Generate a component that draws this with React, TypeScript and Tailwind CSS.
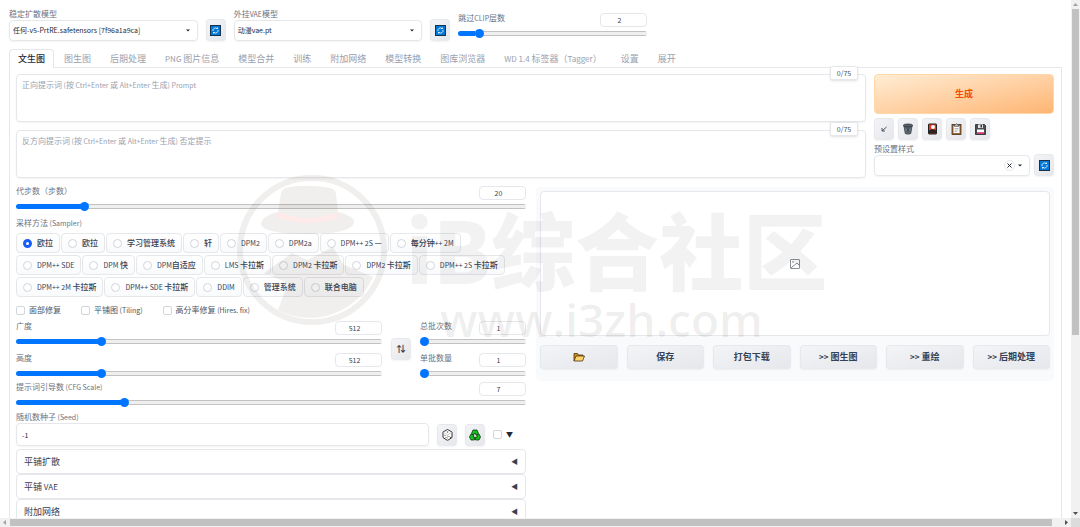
import { ReactNode, useState } from "react";

const models = ["任何-v5-PrtRE.safetensors [7f96a1a9ca]"];
const vaes = ["动漫vae.pt"];

const tabs = [
  "文生图",
  "图生图",
  "后期处理",
  "PNG 图片信息",
  "模型合并",
  "训练",
  "附加网络",
  "模型转换",
  "图库浏览器",
  "WD 1.4 标签器（Tagger）",
  "设置",
  "展开",
];

const samplerRows = [
  ["欧拉", "欧拉", "学习管理系统", "轩", "DPM2", "DPM2a", "DPM++ 2S —", "每分钟++ 2M"],
  ["DPM++ SDE", "DPM 快", "DPM自适应", "LMS 卡拉斯", "DPM2 卡拉斯", "DPM2 卡拉斯", "DPM++ 2S 卡拉斯"],
  ["DPM++ 2M 卡拉斯", "DPM++ SDE 卡拉斯", "DDIM", "管理系统", "联合电脑"],
];

const outputButtons = ["保存", "打包下载", ">> 图生图", ">> 重绘", ">> 后期处理"];
const accordions = ["平铺扩散", "平铺 VAE", "附加网络"];

// latin runs are set one pixel smaller than the chinese around them
function Txt({ children, big }: { children: string; big?: boolean }) {
  const parts = children.split(/([\x20-\x7e]+)/).filter((p) => p !== "");
  return (
    <span className={big ? "text-[9px]" : "text-[8px]"}>
      {parts.map((p, i) =>
        /^[\x20-\x7e]+$/.test(p) ? (
          <span key={i} className={big ? "text-[8px]" : "text-[7px] font-normal"}>
            {p}
          </span>
        ) : (
          p
        )
      )}
    </span>
  );
}

function RefreshIcon() {
  return (
    <svg width="11" height="11" viewBox="0 0 22 22">
      <rect x="1" y="1" width="20" height="20" fill="#0078d7" stroke="#17324d" strokeWidth="2" />
      <path d="M6 12a5 5 0 0 1 8-5M16 10a5 5 0 0 1-8 5" fill="none" stroke="#d5ecff" strokeWidth="2" />
      <path d="M12 8h4V4zM10 14H6v4z" fill="#d5ecff" />
    </svg>
  );
}

function ArrowIcon() {
  return (
    <svg width="10" height="10" viewBox="0 0 20 20" fill="none" stroke="#4b5563" strokeWidth="2">
      <path d="M15 6L6 14" />
      <path d="M6 8v6h6" />
    </svg>
  );
}

function TrashIcon() {
  return (
    <svg width="12" height="12" viewBox="0 0 24 24">
      <path d="M4 6l2.500 15c2 1.500 9 1.500 11 0L20 6z" fill="#6b7780" stroke="#30373c" strokeWidth="1.500" />
      <path d="M8 9l8 10M16 9L8 19M12 8v13" stroke="#39434a" strokeWidth="1.500" />
      <ellipse cx="12" cy="5" rx="9.500" ry="3" fill="#56616a" stroke="#262c30" strokeWidth="1.500" />
    </svg>
  );
}

function CardIcon() {
  return (
    <svg width="11" height="12" viewBox="0 0 22 24">
      <rect x="3" y="2" width="16" height="20" rx="1" fill="#e8381b" stroke="#222" strokeWidth="2" />
      <circle cx="12" cy="8" r="4" fill="#fff" />
      <path d="M4 21v-6q7-5 14 0v6z" fill="#262626" />
    </svg>
  );
}

function ClipboardIcon() {
  return (
    <svg width="11" height="12" viewBox="0 0 22 24">
      <rect x="2" y="3" width="18" height="20" fill="#a5662c" stroke="#33291f" strokeWidth="1.500" />
      <rect x="5" y="6" width="12" height="14" fill="#fff" />
      <path d="M7 11h8M7 14h8M7 17h5" stroke="#777" strokeWidth="1" />
      <path d="M7 7V3h2l2-2 2 2h2v4z" fill="#aeb6bd" stroke="#333" />
    </svg>
  );
}

function FloppyIcon() {
  return (
    <svg width="11" height="11" viewBox="0 0 22 22">
      <path d="M1 1h18l2 2v18H1z" fill="#4a4a4f" stroke="#1f1f22" strokeWidth="1.500" />
      <rect x="6" y="1" width="10" height="7" fill="#dfe3e6" />
      <rect x="11" y="2" width="3" height="5" fill="#333" />
      <rect x="4" y="11" width="14" height="6" fill="#fff" />
      <rect x="4" y="17" width="14" height="3" fill="#e3317f" />
    </svg>
  );
}

function FolderIcon() {
  return (
    <svg width="12" height="10" viewBox="0 0 24 20">
      <path d="M2 18V3h7l2 3h9v4" fill="#d98d17" stroke="#3d2a0c" strokeWidth="1.500" />
      <path d="M2 18L6 8h17l-4 10z" fill="#ffd46b" stroke="#3d2a0c" strokeWidth="1.500" />
    </svg>
  );
}

function DiceIcon() {
  return (
    <svg width="11" height="12" viewBox="0 0 22 24">
      <path d="M11 1l9 5v11l-9 6-9-6V6z" fill="#fff" stroke="#333" strokeWidth="2" />
      <path d="M2 6l9 6 9-6M11 12v11" fill="none" stroke="#bbb" strokeWidth="1.500" />
      <circle cx="11" cy="6" r="1.500" fill="#d22" />
      <path d="M6 12v2M8 16v2M14 14v2M17 16v2" stroke="#555" strokeWidth="2" />
    </svg>
  );
}

function RecycleIcon() {
  return (
    <svg width="12" height="12" viewBox="0 0 24 24" stroke="#0b2c0c" strokeWidth="1.500" strokeLinejoin="round">
      <path d="M8 2h8l3 7-5 3-2-4-3 4-4-3z" fill="#13c21a" />
      <path d="M4 10l6 2-2 4h3v6H4l-3-6z" fill="#13c21a" />
      <path d="M20 10l3 6-3 6h-7v-6h4l-2-4z" fill="#13c21a" />
    </svg>
  );
}

function ImageIcon() {
  return (
    <svg width="10" height="10" viewBox="0 0 20 20" fill="none" stroke="#8a8f98" strokeWidth="2">
      <rect x="1" y="1" width="18" height="18" rx="1" />
      <circle cx="6" cy="6" r="1" />
      <path d="M2 18L14 8l5 5" />
    </svg>
  );
}

function Caret() {
  return (
    <svg width="4" height="3" viewBox="0 0 8 6" className="pointer-events-none shrink-0">
      <path d="M0 1h8L4 5z" fill="#1f2937" />
    </svg>
  );
}

function ToolButton({ label, children }: { label: string; children: ReactNode }) {
  return (
    <button
      aria-label={label}
      className="flex h-[22px] w-5 shrink-0 items-center justify-center rounded border border-gray-200/70 bg-linear-to-br from-gray-100 to-gray-200 text-gray-700 shadow-xs"
    >
      {children}
    </button>
  );
}

function Dropdown({ id, label, options }: { id: string; label: string; options: string[] }) {
  return (
    <div>
      <label htmlFor={id} className="block h-[11px] leading-[10px] text-gray-500">
        <Txt>{label}</Txt>
      </label>
      <div className="flex h-[21px] items-center rounded border border-gray-200 bg-white pr-[7px] shadow-xs">
        <select id={id} className="h-full min-w-0 flex-1 appearance-none bg-transparent pl-[3px] text-[7px] text-gray-800 outline-none">
          {options.map((o) => (
            <option key={o}>{o}</option>
          ))}
        </select>
        <Caret />
      </div>
    </div>
  );
}

type sliderProps = {
  id: string;
  label: string;
  min: number;
  max: number;
  start: number;
};

function Slider({ id, label, min, max, start }: sliderProps) {
  const [value, setValue] = useState<number>(start);
  const percent = ((value - min) / (max - min)) * 100;

  // blue part first, then the grey rail with its two edge lines
  const fill = `linear-gradient(to right, #0075ff ${percent}%, transparent ${percent}%)`;
  const rail = "linear-gradient(#c2c2c2 1px, #efefef 1px 4px, #c2c2c2 4px)";

  return (
    <div>
      <div className="flex h-[14px] items-start justify-between">
        <label htmlFor={id} className="leading-[10px] text-gray-500">
          <Txt>{label}</Txt>
        </label>
        <input
          type="number"
          aria-label={label}
          value={value}
          min={min}
          max={max}
          onChange={(e) => setValue(Number(e.target.value))}
          className="h-[14px] w-[47px] appearance-none rounded border border-gray-200 bg-white pr-2 text-center text-[7px] text-gray-700 [&::-webkit-inner-spin-button]:appearance-none"
        />
      </div>
      <input
        id={id}
        type="range"
        value={value}
        min={min}
        max={max}
        onChange={(e) => setValue(Number(e.target.value))}
        style={{ backgroundImage: `${fill}, ${rail}` }}
        className="mt-1 block h-[5px] w-full appearance-none rounded-full [&::-webkit-slider-thumb]:size-[9px] [&::-webkit-slider-thumb]:appearance-none [&::-webkit-slider-thumb]:rounded-full [&::-webkit-slider-thumb]:bg-[#0075ff]"
      />
    </div>
  );
}

function Prompt({ id, label }: { id: string; label: string }) {
  return (
    <div className="relative">
      <textarea
        id={id}
        placeholder=" "
        className="peer block h-12 w-full resize-none rounded border border-gray-200 px-[5px] py-[5px] text-[8px] leading-3 shadow-xs"
      />
      <label
        htmlFor={id}
        className="pointer-events-none invisible absolute top-[5px] left-[6px] leading-3 text-gray-400 peer-placeholder-shown:visible"
      >
        <Txt>{label}</Txt>
      </label>
      <span className="absolute -top-2 right-2 flex h-[14px] w-7 items-center justify-center rounded-xs border border-gray-200 bg-white text-[7px] text-gray-600 shadow-sm">
        0/75
      </span>
    </div>
  );
}

function Check({ label }: { label: string }) {
  return (
    <label className="flex items-center gap-1 leading-[10px] text-gray-600">
      <input type="checkbox" className="size-[9px] appearance-none rounded-xs border border-gray-300 bg-white checked:bg-blue-600" />
      <Txt>{label}</Txt>
    </label>
  );
}

function Samplers() {
  const [picked, setPicked] = useState("0-0");
  return (
    <div role="radiogroup" aria-labelledby="sampler" className="mt-[5px] flex flex-col gap-[2px]">
      {samplerRows.map((row, r) => (
        <div key={r} className="flex gap-px">
          {row.map((name, i) => (
            <label
              key={i}
              className="flex h-5 items-center gap-[5px] rounded border border-gray-200 bg-linear-to-b from-white to-gray-50 px-[6px] font-medium whitespace-nowrap text-gray-700"
            >
              <input
                type="radio"
                name="sampler"
                checked={picked === `${r}-${i}`}
                onChange={() => setPicked(`${r}-${i}`)}
                className="size-[9px] appearance-none rounded-full border border-gray-300 bg-white checked:border-[3px] checked:border-blue-600"
              />
              <Txt>{name}</Txt>
            </label>
          ))}
        </div>
      ))}
    </div>
  );
}

function Settings() {
  return (
    <div className="min-w-0">
      <Slider id="steps" label="代步数（步数）" min={1} max={150} start={20} />
      <p id="sampler" className="mt-[9px] leading-[10px] text-gray-500">
        <Txt>采样方法 (Sampler)</Txt>
      </p>
      <Samplers />
      <div className="mt-2 flex h-[10px] gap-5">
        <Check label="面部修复" />
        <Check label="平铺图 (Tiling)" />
        <Check label="高分率修复 (Hires. fix)" />
      </div>
      <div className="mt-[6px] flex items-center gap-[9px]">
        <div className="flex flex-1 flex-col gap-[9px]">
          <Slider id="width" label="广度" min={64} max={2048} start={512} />
          <Slider id="height" label="高度" min={64} max={2048} start={512} />
        </div>
        <ToolButton label="交换">
          <span className="text-[9px] font-bold">⇅</span>
        </ToolButton>
        <div className="flex w-[106px] flex-col gap-[9px]">
          <Slider id="count" label="总批次数" min={1} max={100} start={1} />
          <Slider id="size" label="单批数量" min={1} max={8} start={1} />
        </div>
      </div>
      <div className="mt-[6px]">
        <Slider id="cfg" label="提示词引导数 (CFG Scale)" min={1} max={30} start={7} />
      </div>
      <label htmlFor="seed" className="mt-[7px] block h-[11px] leading-[10px] text-gray-500">
        <Txt>随机数种子 (Seed)</Txt>
      </label>
      <div className="flex items-center gap-2">
        <input
          id="seed"
          defaultValue="-1"
          className="h-[23px] min-w-0 flex-1 rounded border border-gray-200 px-[5px] text-[7px] text-gray-800 shadow-xs"
        />
        <ToolButton label="随机">
          <DiceIcon />
        </ToolButton>
        <ToolButton label="重用">
          <RecycleIcon />
        </ToolButton>
        <label className="flex w-[33px] items-center gap-1 text-[7px] text-gray-800">
          <input type="checkbox" className="size-[9px] appearance-none rounded-xs border border-gray-300 bg-white" />
          ▼
        </label>
      </div>
      <div className="mt-[3px]">
        {accordions.map((a) => (
          <button
            key={a}
            className="flex h-[25px] w-full items-center justify-between rounded border border-gray-200 bg-white px-[7px] text-gray-700"
          >
            <Txt big>{a}</Txt>
            <span className="text-[7px]">◀</span>
          </button>
        ))}
      </div>
    </div>
  );
}

function Output() {
  return (
    <div className="mt-px self-start rounded bg-gray-50 px-1 pt-1 pb-3">
      <div className="flex h-[145px] items-center justify-center rounded border border-gray-200 bg-white">
        <ImageIcon />
      </div>
      <div className="mt-[9px] grid grid-cols-6 gap-[9px]">
        <button
          aria-label="打开文件夹"
          className="flex h-6 items-center justify-center rounded border border-gray-200/70 bg-linear-to-br from-gray-100 to-gray-200 shadow-xs"
        >
          <FolderIcon />
        </button>
        {outputButtons.map((b) => (
          <button
            key={b}
            className="h-6 rounded border border-gray-200/70 bg-linear-to-br from-gray-100 to-gray-200 font-bold whitespace-nowrap text-gray-700 shadow-xs"
          >
            <Txt big>{b}</Txt>
          </button>
        ))}
      </div>
    </div>
  );
}

function Actions() {
  return (
    <div>
      <button className="h-10 w-full rounded border border-orange-200 bg-linear-to-br from-orange-100 to-[#fdb572] text-[9px] font-bold text-orange-600">
        生成
      </button>
      <div className="mt-1 flex gap-1">
        <ToolButton label="读取参数">
          <ArrowIcon />
        </ToolButton>
        <ToolButton label="清空">
          <TrashIcon />
        </ToolButton>
        <ToolButton label="额外网络">
          <CardIcon />
        </ToolButton>
        <ToolButton label="应用样式">
          <ClipboardIcon />
        </ToolButton>
        <ToolButton label="保存样式">
          <FloppyIcon />
        </ToolButton>
      </div>
      <label htmlFor="styles" className="mt-1 block h-[10px] leading-[10px] text-gray-500">
        <Txt>预设置样式</Txt>
      </label>
      <div className="flex items-center gap-1">
        <div className="flex h-[21px] min-w-0 flex-1 items-center gap-[3px] rounded border border-gray-200 bg-white pr-[7px] shadow-xs">
          <input id="styles" className="h-full min-w-0 flex-1 bg-transparent px-1 text-[7px] outline-none" />
          <button
            aria-label="清除"
            className="flex size-[11px] items-center justify-center rounded-full border border-gray-200"
          >
            <svg width="5" height="5" viewBox="0 0 10 10" stroke="#1f2937" strokeWidth="2">
              <path d="M1 1l8 8M9 1L1 9" />
            </svg>
          </button>
          <Caret />
        </div>
        <ToolButton label="刷新样式">
          <RefreshIcon />
        </ToolButton>
      </div>
    </div>
  );
}

function Watermark() {
  return (
    <div className="pointer-events-none absolute top-[170px] left-[232px] flex whitespace-nowrap text-black/5">
      <svg width="160" height="160" viewBox="0 0 160 160" className="shrink-0 text-[#3a3020]/8">
        <circle cx="80" cy="80" r="72" fill="none" stroke="currentColor" strokeWidth="6" />
        <path
          d="M46 42L49 23Q50 18 57 17Q78 14 98 18Q103 19 104 24L106 42Q123 46 122 53Q118 64 76 64Q34 64 29 55Q29 46 46 42Z"
          fill="currentColor"
        />
        <path d="M46 42Q76 54 106 42L105 48Q76 58 45 47Z" fill="#ffe9e9" />
        <path
          d="M32 103L60 83L75 90L101 77L112 95L141 107A69 69 0 0 1 46 140L56 113Z"
          fill="currentColor"
        />
      </svg>
      <div className="flex flex-col pt-7 pl-[14px]">
        <span className="text-[84px] leading-[100px] font-black">iB综合社区</span>
        <span className="-mt-1 pl-[34px] font-['Open_Sans'] text-[46px] leading-[50px] font-semibold text-black/7">
          www.i3zh.com
        </span>
      </div>
    </div>
  );
}

function App() {
  const [tab, setTab] = useState(0);

  return (
    <div className="flex h-screen flex-col overflow-hidden bg-white font-['Noto_Sans_CJK_SC','Noto_Sans',sans-serif] text-[8px]">
      <div className="flex min-h-0 flex-1">
        <main className="relative min-w-0 flex-1 overflow-hidden px-[9px] pt-[9px]">
          <div className="grid max-w-[638px] grid-cols-[1fr_20px_1fr_20px_1fr] gap-2">
            <Dropdown id="model" label="稳定扩散模型" options={models} />
            <div className="self-end">
              <ToolButton label="刷新模型">
                <RefreshIcon />
              </ToolButton>
            </div>
            <Dropdown id="vae" label="外挂VAE模型" options={vaes} />
            <div className="self-end">
              <ToolButton label="刷新VAE">
                <RefreshIcon />
              </ToolButton>
            </div>
            <div className="mt-1">
              <Slider id="clip" label="跳过CLIP层数" min={1} max={12} start={2} />
            </div>
          </div>

          <nav className="relative mt-2 flex h-[19px] gap-px">
            {tabs.map((t, i) => (
              <button
                key={t}
                onClick={() => setTab(i)}
                className={
                  i === tab
                    ? "rounded-t border border-b-0 border-gray-200 bg-white px-2 font-medium whitespace-nowrap text-gray-800"
                    : "border border-b-0 border-transparent px-2 whitespace-nowrap text-gray-400"
                }
              >
                <Txt big>{t}</Txt>
              </button>
            ))}
          </nav>

          <div className="-mt-px border border-gray-200 pr-[7px] pl-[6px] pt-[6px]">
            <div className="grid grid-cols-[850fr_180fr] gap-2">
              <div className="flex flex-col gap-2">
                <Prompt id="prompt" label="正向提示词 (按 Ctrl+Enter 或 Alt+Enter 生成) Prompt" />
                <Prompt id="negative" label="反方向提示词 (按 Ctrl+Enter 或 Alt+Enter 生成) 否定提示" />
              </div>
              <Actions />
            </div>
            <div className="mt-2 grid grid-cols-[510fr_518fr] gap-[10px]">
              <Settings />
              <Output />
            </div>
          </div>
          <Watermark />
        </main>

        <div className="flex w-[9px] shrink-0 flex-col items-center bg-[#f1f1f1]">
          <svg width="9" height="9" viewBox="0 0 9 9">
            <path d="M2 6h5L4.500 3z" fill="#a3a3a3" />
          </svg>
          <div className="h-[63%] w-[7px] bg-[#c1c1c1]" />
          <svg width="9" height="9" viewBox="0 0 9 9" className="mt-auto">
            <path d="M2 3h5L4.500 6z" fill="#505050" />
          </svg>
        </div>
      </div>

      <div className="flex h-[9px] shrink-0 items-center bg-[#f1f1f1]">
        <svg width="10" height="9" viewBox="0 0 10 9">
          <path d="M6 2v5L3 4.500z" fill="#a3a3a3" />
        </svg>
        <div className="mr-[10px] h-[7px] flex-1 bg-[#c1c1c1]" />
        <svg width="9" height="9" viewBox="0 0 9 9">
          <path d="M3 2v5l3-2.500z" fill="#505050" />
        </svg>
        <div className="size-[9px] bg-[#dcdcdc]" />
      </div>
    </div>
  );
}

export default App;
